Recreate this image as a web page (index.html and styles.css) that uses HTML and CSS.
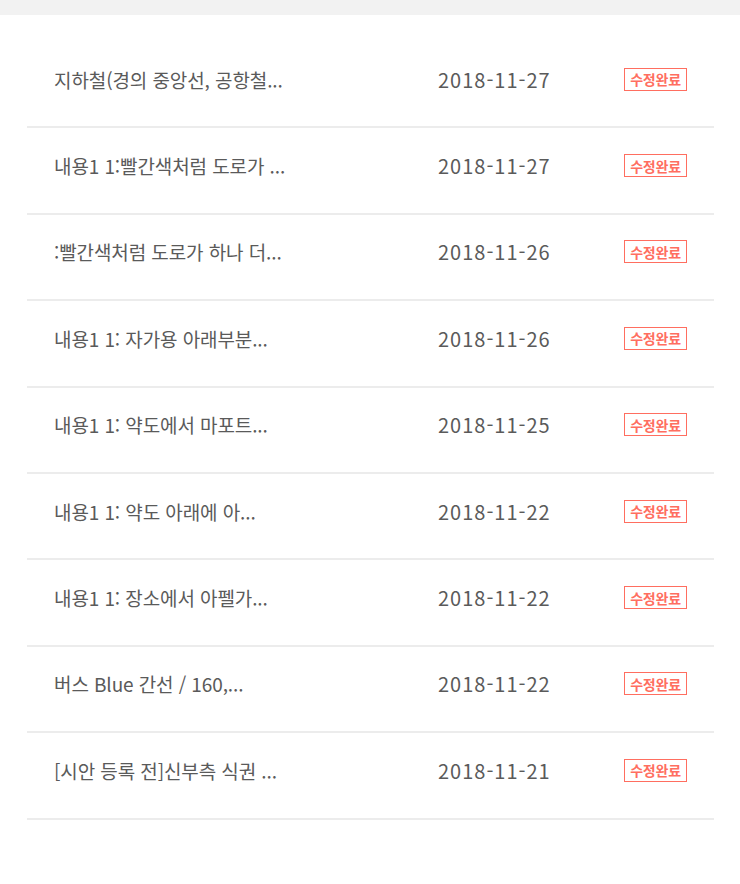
FILE: index.html
```html
<!DOCTYPE html>
<html lang="ko">
<head>
<meta charset="utf-8">
<link rel="stylesheet" href="styles.css">
</head>
<body>
<div class="topbar"></div>
<ul class="list">
  <li class="row"><span class="title">지하철(경의 중앙선, 공항철...</span><span class="date">2018-11-27</span><span class="badge">수정완료</span></li>
  <li class="row"><span class="title">내용1 1:빨간색처럼 도로가 ...</span><span class="date">2018-11-27</span><span class="badge">수정완료</span></li>
  <li class="row"><span class="title">:빨간색처럼 도로가 하나 더...</span><span class="date">2018-11-26</span><span class="badge">수정완료</span></li>
  <li class="row"><span class="title">내용1 1: 자가용 아래부분...</span><span class="date">2018-11-26</span><span class="badge">수정완료</span></li>
  <li class="row"><span class="title">내용1 1: 약도에서 마포트...</span><span class="date">2018-11-25</span><span class="badge">수정완료</span></li>
  <li class="row"><span class="title">내용1 1: 약도 아래에 아...</span><span class="date">2018-11-22</span><span class="badge">수정완료</span></li>
  <li class="row"><span class="title">내용1 1: 장소에서 아펠가...</span><span class="date">2018-11-22</span><span class="badge">수정완료</span></li>
  <li class="row"><span class="title">버스 Blue 간선 / 160,...</span><span class="date">2018-11-22</span><span class="badge">수정완료</span></li>
  <li class="row"><span class="title">[시안 등록 전]신부측 식권 ...</span><span class="date">2018-11-21</span><span class="badge">수정완료</span></li>
</ul>
</body>
</html>
```
FILE: styles.css
```css
html, body {
  margin: 0;
  padding: 0;
  background: #fff;
}
body {
  font-family: "Noto Sans CJK KR", "Noto Sans", sans-serif;
  color: #5a5a5a;
}
.topbar {
  height: 15px;
  background: #f2f2f2;
}
.list {
  list-style: none;
  margin: 0 26px 0 27px;
  padding: 27px 0 0 0;
}
.row {
  display: flex;
  align-items: center;
  box-sizing: content-box;
  height: 74.4px;
  padding: 0 0 10px 27px;
  border-bottom: 2px solid #ececec;
}
.title {
  width: 384px;
  font-size: 19px;
  letter-spacing: -0.1px;
  white-space: nowrap;
}
.date {
  width: 186px;
  font-size: 20px;
  letter-spacing: 1px;
}
.badge {
  display: inline-flex;
  align-items: center;
  justify-content: center;
  width: 61px;
  height: 21px;
  border: 1px solid #ff6e60;
  color: #ff6e60;
  font-size: 14px;
  font-weight: 700;
  letter-spacing: -0.2px;
}
```
